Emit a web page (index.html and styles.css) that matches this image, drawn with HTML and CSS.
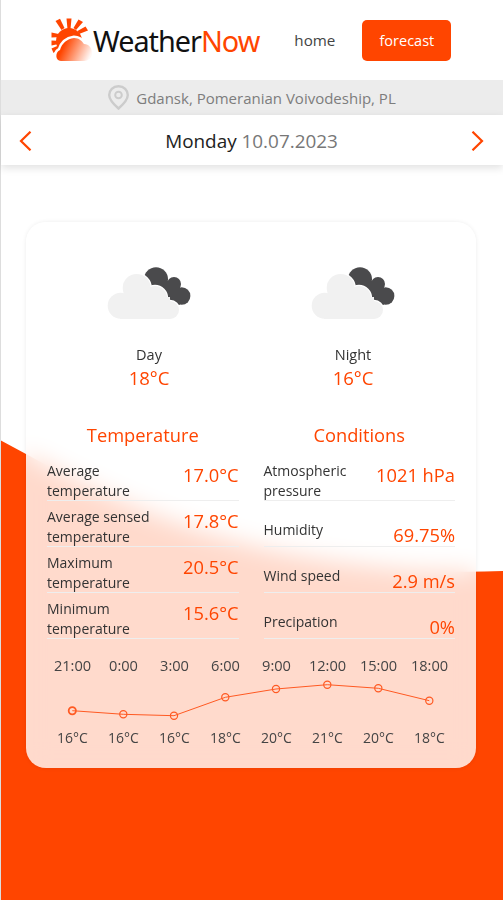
FILE: index.html
```html
<!DOCTYPE html>
<html lang="en">
<head>
    <meta charset="UTF-8">
    <meta name="viewport" content="width=device-width, initial-scale=1.0">
    <title>WeatherNow</title>
    <link rel="stylesheet" href="styles.css">
</head>
<body>
    <svg class="wave" viewBox="0 0 503 900" preserveAspectRatio="none">
        <path d="M0 440 L26 454 C110 500 200 538 300 556 C370 568 430 574 503 571 V900 H0 Z" fill="#ff4500"/>
    </svg>
    <svg class="defs" width="0" height="0">
        <defs>
            <linearGradient id="sunCloud" x1="0" y1="0.3" x2="1" y2="0.6">
                <stop offset="0.2" stop-color="#ff4500"/>
                <stop offset="1" stop-color="#ff4500" stop-opacity="0.04"/>
            </linearGradient>
            <symbol id="cloudIcon" viewBox="0 0 84 54">
                <g fill="#4a4a4c">
                    <circle cx="49" cy="12.300" r="12"/>
                    <circle cx="67" cy="17" r="7"/>
                    <circle cx="74.700" cy="29" r="8.700"/>
                    <rect x="50" y="14" width="23" height="23.700"/>
                </g>
                <g fill="#fff" stroke="#fff" stroke-width="2.400">
                    <circle cx="29.700" cy="21" r="14"/>
                    <circle cx="48" cy="31" r="12"/>
                    <circle cx="63" cy="43" r="9"/>
                </g>
                <g fill="#f1f1f1">
                    <circle cx="29.700" cy="21" r="14"/>
                    <circle cx="13.700" cy="38.700" r="13"/>
                    <circle cx="48" cy="31" r="12"/>
                    <circle cx="63" cy="43" r="9"/>
                    <rect x="13" y="30" width="50" height="22"/>
                </g>
            </symbol>
        </defs>
    </svg>
    <div class="page">
        <header class="topbar">
            <a class="logo">
                <svg class="logo-icon" viewBox="0 0 42 44">
                    <g fill="#ff4500">
                        <path d="M15.500 0.500 L20.500 0.500 L19.500 11 L16.500 11 Z"/>
                        <path d="M4.500 3 L9 0.800 L13.500 10 L10.500 12 Z"/>
                        <path d="M27.500 1.500 L32 4 L25 12 L22.500 10 Z"/>
                        <path d="M34.500 8.500 L37 12.500 L28 16 L26.500 13 Z"/>
                        <path d="M0.500 14.500 L0.500 19.500 L10 19 L10 16.500 Z"/>
                        <path d="M0.500 22.500 L0.500 27.500 L10 25.500 L10 23 Z"/>
                        <path d="M0.500 30.500 L2.500 35 L10 30 L8.500 27 Z"/>
                    </g>
                    <circle cx="18" cy="23" r="13" fill="#ff4500"/>
                    <path d="M10 43 C4 43 4 34 9 32 C11 25 16 21 23 20 C28 20 31 23 33 26 C38 26 41 30 41 35 C41 40 37 43 33 43 Z" fill="#fff" stroke="#fff" stroke-width="5"/>
                    <path d="M10 43 C4 43 4 34 9 32 C11 25 16 21 23 20 C28 20 31 23 33 26 C38 26 41 30 41 35 C41 40 37 43 33 43 Z" fill="url(#sunCloud)"/>
                </svg>
                <span class="logo-text">Weather<span class="accent">Now</span></span>
            </a>
            <a class="nav-link">home</a>
            <a class="nav-btn">forecast</a>
        </header>
        <div class="location">
            <svg class="pin" viewBox="0 0 21 25">
                <path d="M10.500 1.200 C5 1.200 1.200 5.300 1.200 10 C1.200 15 6.500 20 10.500 23.500 C14.500 20 19.800 15 19.800 10 C19.800 5.300 16 1.200 10.500 1.200 Z" fill="none" stroke="#ccc" stroke-width="2.400"/>
                <circle cx="10.500" cy="10" r="3.300" fill="none" stroke="#ccc" stroke-width="2"/>
            </svg>
            <span>Gdansk, Pomeranian Voivodeship, PL</span>
        </div>
        <div class="datebar">
            <svg class="arrow" viewBox="0 0 13 20"><path d="M11.500 0.700 L2 10 L11.500 19.300" fill="none" stroke="#ff4500" stroke-width="2.200"/></svg>
            <div class="date"><span class="day-name">Monday</span> 10.07.2023</div>
            <svg class="arrow" viewBox="0 0 13 20"><path d="M1.500 0.700 L11 10 L1.500 19.300" fill="none" stroke="#ff4500" stroke-width="2.200"/></svg>
        </div>

        <main class="card">
            <section class="summary">
                <div class="summary-item">
                    <svg class="cloud"><use href="#cloudIcon"/></svg>
                    <div class="summary-label">Day</div>
                    <div class="summary-temp">18°C</div>
                </div>
                <div class="summary-item">
                    <svg class="cloud"><use href="#cloudIcon"/></svg>
                    <div class="summary-label">Night</div>
                    <div class="summary-temp">16°C</div>
                </div>
            </section>

            <section class="details">
                <div class="detail-col">
                    <h2>Temperature</h2>
                    <div class="row"><span class="row-label">Average temperature</span><span class="row-value">17.0°C</span></div>
                    <div class="row"><span class="row-label">Average sensed temperature</span><span class="row-value">17.8°C</span></div>
                    <div class="row"><span class="row-label">Maximum temperature</span><span class="row-value">20.5°C</span></div>
                    <div class="row"><span class="row-label">Minimum temperature</span><span class="row-value">15.6°C</span></div>
                </div>
                <div class="detail-col">
                    <h2>Conditions</h2>
                    <div class="row"><span class="row-label">Atmospheric pressure</span><span class="row-value">1021 hPa</span></div>
                    <div class="row row-low"><span class="row-label">Humidity</span><span class="row-value">69.75%</span></div>
                    <div class="row row-low"><span class="row-label">Wind speed</span><span class="row-value">2.9 m/s</span></div>
                    <div class="row row-low"><span class="row-label">Precipation</span><span class="row-value">0%</span></div>
                </div>
            </section>

            <section class="hourly">
                <div class="hours hours-time">
                    <span>21:00</span><span>0:00</span><span>3:00</span><span>6:00</span><span>9:00</span><span>12:00</span><span>15:00</span><span>18:00</span>
                </div>
                <svg class="chart" viewBox="0 0 408 53">
                    <polyline points="25.300,35.700 76.300,39.300 127,40.700 178.300,22.300 229,14 280.300,9.700 331.300,13.300 382.300,25.700" fill="none" stroke="#ff5a22" stroke-width="1"/>
                    <g fill="none" stroke="#ff5a22" stroke-width="1.200">
                        <circle cx="25.300" cy="35.700" r="3.600" stroke-width="1.800"/>
                        <circle cx="76.300" cy="39.300" r="3.600"/>
                        <circle cx="127" cy="40.700" r="3.600"/>
                        <circle cx="178.300" cy="22.300" r="3.600"/>
                        <circle cx="229" cy="14" r="3.600"/>
                        <circle cx="280.300" cy="9.700" r="3.600"/>
                        <circle cx="331.300" cy="13.300" r="3.600"/>
                        <circle cx="382.300" cy="25.700" r="3.600"/>
                    </g>
                </svg>
                <div class="hours">
                    <span>16°C</span><span>16°C</span><span>16°C</span><span>18°C</span><span>20°C</span><span>21°C</span><span>20°C</span><span>18°C</span>
                </div>
            </section>
        </main>
    </div>
</body>
</html>
```

FILE: styles.css
```css
* {
    box-sizing: border-box;
}
html, body {
    margin: 0;
    padding: 0;
}
body {
    font-family: "Open Sans", "Noto Sans", sans-serif;
    color: #333;
    background: #fff;
    width: 503px;
    height: 900px;
    overflow: hidden;
    position: relative;
}
.wave {
    position: absolute;
    top: 0;
    left: 0;
    width: 503px;
    height: 900px;
}
.defs {
    position: absolute;
}
.page {
    position: relative;
    height: 900px;
    border-left: 1px solid #ddd;
}
.topbar {
    display: flex;
    align-items: center;
    height: 80px;
    padding-left: 50px;
}
.logo {
    display: flex;
    align-items: center;
}
.logo-icon {
    width: 42px;
    height: 44px;
}
.logo-text {
    font-family: "Noto Sans", sans-serif;
    font-size: 28.8px;
    letter-spacing: -1px;
    color: #111;
    margin-left: 0;
}
.accent {
    color: #ff4500;
}
.nav-link {
    margin-left: 35px;
    font-size: 15.2px;
    color: #444;
}
.nav-btn {
    margin-left: 27px;
    width: 89px;
    height: 41px;
    line-height: 41px;
    text-align: center;
    background: #ff4500;
    color: #fff;
    font-size: 14.5px;
    border-radius: 5px;
}
.location {
    display: flex;
    align-items: center;
    justify-content: center;
    gap: 7px;
    height: 35px;
    background: #ececec;
    color: #7d7d7d;
    font-size: 15px;
}
.pin {
    width: 21px;
    height: 25px;
}
.datebar {
    display: flex;
    align-items: center;
    justify-content: space-between;
    height: 50px;
    padding: 2px 19px 0 18px;
    background: #fff;
    box-shadow: 0 3px 8px rgba(0, 0, 0, 0.12);
}
.arrow {
    width: 13px;
    height: 20px;
}
.date {
    font-size: 18.9px;
    color: #777;
}
.day-name {
    color: #222;
}
.card {
    position: absolute;
    top: 222px;
    left: 25px;
    width: 450px;
    height: 546px;
    padding: 0 21px;
    border-radius: 20px;
    background: rgba(255, 255, 255, 0.8);
    backdrop-filter: blur(12px);
    box-shadow: 0 0 4px rgba(0, 0, 0, 0.08);
}
.summary {
    display: flex;
    height: 186px;
    padding-top: 45px;
}
.summary-item {
    display: flex;
    flex-direction: column;
    align-items: center;
    width: 204px;
}
.cloud {
    width: 84px;
    height: 54px;
}
.summary-label {
    margin-top: 24px;
    font-size: 14.5px;
    color: #333;
}
.summary-temp {
    font-size: 18.5px;
    color: #ff4500;
    margin-top: 1px;
}
.details {
    display: flex;
    gap: 25px;
    height: 247px;
}
.detail-col {
    width: 192px;
}
.detail-col h2 {
    margin: 12px 0 5px;
    font-size: 18.3px;
    font-weight: 400;
    line-height: 30px;
    text-align: center;
    color: #ff4500;
}
.row {
    display: flex;
    justify-content: space-between;
    align-items: flex-end;
    height: 46px;
    border-bottom: 1px solid #eee;
    font-size: 14px;
    line-height: 20px;
}
.row-label {
    max-width: 125px;
    margin-bottom: -1px;
    color: #333;
}
.row-value {
    font-size: 18.3px;
    line-height: 24px;
    color: #ff4500;
    white-space: nowrap;
    margin-bottom: 13px;
}
.row-low .row-label {
    margin-bottom: 6px;
}
.row-low .row-value {
    margin-bottom: -1px;
}
.hours {
    display: flex;
    justify-content: space-between;
    font-size: 14px;
    line-height: 20px;
    color: #444;
}
.hours-time {
    font-size: 14.6px;
}
.hours span {
    width: 51px;
    text-align: center;
}
.chart {
    display: block;
    width: 408px;
    height: 53px;
    overflow: visible;
}
```
